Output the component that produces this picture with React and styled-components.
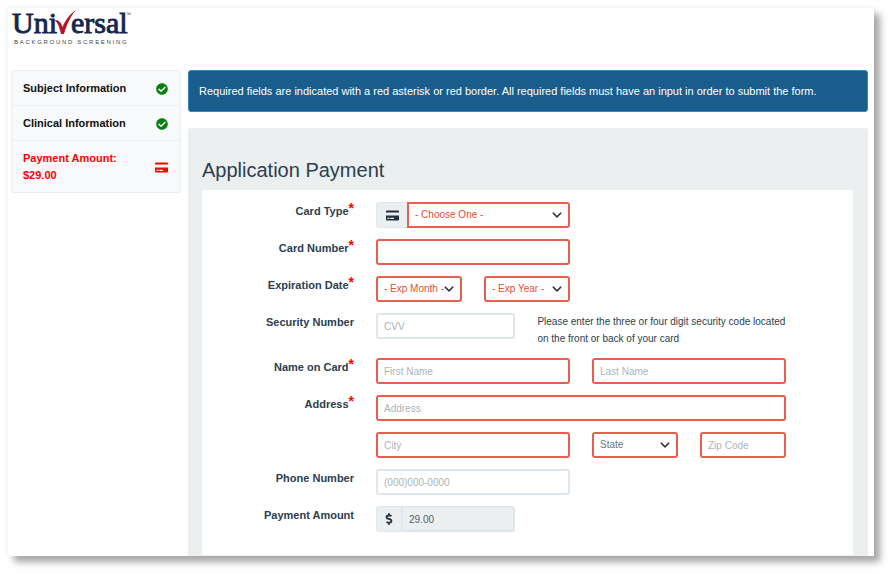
import styled, { createGlobalStyle } from "styled-components";
import { FaCheckCircle, FaCreditCard, FaDollarSign } from "react-icons/fa";

const chevron =
  "url(\"data:image/svg+xml,%3Csvg xmlns='http://www.w3.org/2000/svg' viewBox='0 0 16 16'%3E%3Cpath fill='none' stroke='%23343a40' stroke-linecap='round' stroke-linejoin='round' stroke-width='2.4' d='M2 5l6 6 6-6'/%3E%3C/svg%3E\")";

const GlobalStyle = createGlobalStyle`
  * {
    box-sizing: border-box;
  }

  body {
    margin: 0;
    background: #fff;
    color: #2c3e50;
    font-family: "Liberation Sans", Arial, sans-serif;
    font-size: 11px;
  }
`;

const Page = styled.div`
  min-height: 100vh;
  padding: 8px 18px 18px 8px;
  display: flex;
`;

const Sheet = styled.div`
  flex: 1;
  display: flex;
  flex-direction: column;
  padding: 2px 6px 0 3px;
  background: #fff;
  box-shadow: 6px 6px 7px #a6a6a6, 0 0 6px #f0f0f0;
`;

const Header = styled.header`
  height: 60px;
`;

const Columns = styled.div`
  flex: 1;
  display: grid;
  grid-template-columns: 1fr 4fr;
  gap: 7px;
`;

const Steps = styled.nav`
  align-self: start;
  border: 1px solid #eceff1;
  border-radius: 3px;
  background: #f8f9fb;
`;

const Step = styled.a`
  display: flex;
  align-items: center;
  justify-content: space-between;
  padding: 9px 12px 8px 11px;
  color: ${({ $current }) => ($current ? "#ff0000" : "#111")};
  font-weight: bold;
  line-height: 17px;
  text-decoration: none;

  & + & {
    border-top: 1px solid #eceff1;
  }

  svg {
    color: ${({ $current }) => ($current ? "#ff0000" : "#078010")};
  }
`;

const Main = styled.main`
  display: flex;
  flex-direction: column;
  gap: 16px;
`;

const Notice = styled.div`
  padding: 12px 10px;
  border: 1px solid #3487bd;
  border-radius: 3px;
  background: #195d8c;
  color: #fff;
  line-height: 16px;
`;

const Panel = styled.section`
  flex: 1;
  display: flex;
  flex-direction: column;
  padding: 28px 15px 1px 14px;
  border-radius: 3px 3px 0 0;
  background: #ebeff0;
`;

const Title = styled.h1`
  margin: 0 0 6px;
  font-size: 20px;
  font-weight: normal;
  line-height: 28px;
`;

const Form = styled.form`
  flex: 1;
  display: flex;
  flex-direction: column;
  gap: 11px;
  padding: 12px 67px 22px 0;
  border-radius: 3px 3px 0 0;
  background: #fff;
`;

const Row = styled.div`
  display: grid;
  grid-template-columns: 152px repeat(4, 1fr);
  column-gap: 22px;
`;

const Label = styled.label`
  color: #2c3e50;
  font-weight: bold;
  line-height: 18px;
  text-align: right;
`;

const Required = styled.sup`
  color: #ff0000;
  font-size: 14px;
  line-height: 0;
  vertical-align: 2px;
`;

const Cell = styled.div`
  grid-column: ${({ $start }) => $start || "auto"} / span ${({ $span }) => $span || 1};
  display: flex;
  gap: ${({ $gap }) => $gap || 0}px;
`;

const Input = styled.input`
  width: 100%;
  min-width: 0;
  height: 26px;
  padding: 0 6px;
  border: 2px solid ${({ $required }) => ($required ? "#ea5e50" : "#dfe6ec")};
  border-radius: 3px;
  background: #fff;
  color: #55626e;
  font-family: inherit;
  font-size: 10px;
  outline: none;

  &::placeholder {
    color: #aab4bb;
    opacity: 1;
  }

  &:read-only {
    border-radius: 0 3px 3px 0;
    background: #ebeff0;
  }
`;

const Select = styled.select`
  width: 100%;
  min-width: 0;
  height: 26px;
  padding: 0 6px 2px;
  appearance: none;
  border: 2px solid #ea5e50;
  border-radius: ${({ $grouped }) => ($grouped ? "0 3px 3px 0" : "3px")};
  background: #fff ${chevron} no-repeat right 6px center / 10px;
  color: ${({ $muted }) => ($muted ? "#6c757d" : "#e74c3c")};
  font-family: inherit;
  font-size: 10px;
  outline: none;
`;

const Addon = styled.span`
  flex: none;
  display: flex;
  align-items: center;
  justify-content: center;
  width: ${({ $width }) => $width}px;
  height: 26px;
  border: 1px solid #dfe6ec;
  border-right: 0;
  border-radius: 3px 0 0 3px;
  background: #ebeff0;
  color: #212f3d;
`;

const Group = styled.div`
  flex: none;
  display: flex;
  width: 34%;
`;

const Hint = styled.p`
  flex: 1;
  margin: 0;
  font-size: 10px;
  line-height: 17px;
`;

const LogoMark = styled.svg`
  display: block;
  overflow: visible;
`;

const Logo = () => (
  <LogoMark width="122" height="38" viewBox="0 0 122 38" role="img" aria-label="Universal Background Screening">
    <g fill="#14264d" stroke="#14264d" strokeWidth="0.9" fontFamily="Liberation Serif, serif" fontSize="30">
      <text x="1" y="23">Uni</text>
      <text x="60" y="23">ersal</text>
    </g>
    <path d="M43.500 10.500c4-1 6.500 1.500 8 6.500C54 11 58 4.500 65 0c-5.500 6.500-9 14-12 24h-3C48.500 18 47 12.500 43.500 10.500z" fill="#b5182d" />
    <text x="3" y="34" fill="#444" fontFamily="Liberation Sans, sans-serif" fontSize="6" letterSpacing="1.700">
      BACKGROUND SCREENING
    </text>
    <text x="115" y="6" fill="#14264d" fontFamily="Liberation Sans, sans-serif" fontSize="5">
      ™
    </text>
  </LogoMark>
);

const FieldLabel = ({ id, required, children }) => (
  <Label htmlFor={id}>
    {children}
    {required && <Required>*</Required>}
  </Label>
);

const App = () => (
  <>
    <GlobalStyle />
    <Page>
      <Sheet>
        <Header>
          <Logo />
        </Header>
        <Columns>
          <Steps>
            <Step href="#subject">
              Subject Information
              <FaCheckCircle size={12} />
            </Step>
            <Step href="#clinical">
              Clinical Information
              <FaCheckCircle size={12} />
            </Step>
            <Step href="#payment" $current>
              <span>
                Payment Amount:
                <br />
                $29.00
              </span>
              <FaCreditCard size={13} />
            </Step>
          </Steps>
          <Main>
            <Notice>
              Required fields are indicated with a red asterisk or red border. All required fields must have an input in
              order to submit the form.
            </Notice>
            <Panel>
              <Title>Application Payment</Title>
              <Form>
                <Row>
                  <FieldLabel id="card-type" required>Card Type</FieldLabel>
                  <Cell $span={2}>
                    <Addon $width={31}>
                      <FaCreditCard size={13} />
                    </Addon>
                    <Select id="card-type" $grouped>
                      <option>- Choose One -</option>
                    </Select>
                  </Cell>
                </Row>
                <Row>
                  <FieldLabel id="card-number" required>Card Number</FieldLabel>
                  <Cell $span={2}>
                    <Input id="card-number" $required />
                  </Cell>
                </Row>
                <Row>
                  <FieldLabel id="exp-month" required>Expiration Date</FieldLabel>
                  <Cell>
                    <Select id="exp-month">
                      <option>- Exp Month -</option>
                    </Select>
                  </Cell>
                  <Cell>
                    <Select aria-label="Expiration year">
                      <option>- Exp Year -</option>
                    </Select>
                  </Cell>
                </Row>
                <Row>
                  <FieldLabel id="cvv">Security Number</FieldLabel>
                  <Cell $span={4} $gap={22}>
                    <Group>
                      <Input id="cvv" placeholder="CVV" />
                    </Group>
                    <Hint>Please enter the three or four digit security code located on the front or back of your card</Hint>
                  </Cell>
                </Row>
                <Row>
                  <FieldLabel id="first-name" required>Name on Card</FieldLabel>
                  <Cell $span={2}>
                    <Input id="first-name" placeholder="First Name" $required />
                  </Cell>
                  <Cell $span={2}>
                    <Input aria-label="Last name" placeholder="Last Name" $required />
                  </Cell>
                </Row>
                <Row>
                  <FieldLabel id="address" required>Address</FieldLabel>
                  <Cell $span={4}>
                    <Input id="address" placeholder="Address" $required />
                  </Cell>
                </Row>
                <Row>
                  <Cell $start={2} $span={2}>
                    <Input aria-label="City" placeholder="City" $required />
                  </Cell>
                  <Cell>
                    <Select aria-label="State" $muted>
                      <option>State</option>
                    </Select>
                  </Cell>
                  <Cell>
                    <Input aria-label="Zip code" placeholder="Zip Code" $required />
                  </Cell>
                </Row>
                <Row>
                  <FieldLabel id="phone">Phone Number</FieldLabel>
                  <Cell $span={2}>
                    <Input id="phone" placeholder="(000)000-0000" />
                  </Cell>
                </Row>
                <Row>
                  <FieldLabel id="amount">Payment Amount</FieldLabel>
                  <Cell $span={4}>
                    <Group>
                      <Addon $width={25}>
                        <FaDollarSign size={12} />
                      </Addon>
                      <Input id="amount" defaultValue="29.00" readOnly />
                    </Group>
                  </Cell>
                </Row>
              </Form>
            </Panel>
          </Main>
        </Columns>
      </Sheet>
    </Page>
  </>
);

export default App;
